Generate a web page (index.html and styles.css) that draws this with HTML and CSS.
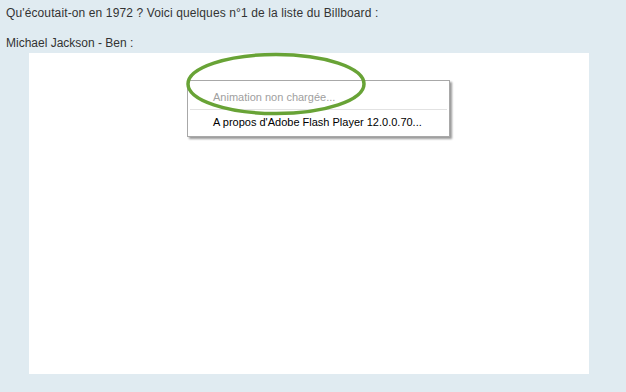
FILE: index.html
```html
<!DOCTYPE html>
<html lang="fr">
<head>
    <meta charset="UTF-8">
    <title>Billboard 1972</title>
    <link rel="stylesheet" href="styles.css">
</head>
<body>
    <div class="post">
        <p class="intro">Qu'écoutait-on en 1972 ? Voici quelques n°1 de la liste du Billboard :</p>
        <p class="song">Michael Jackson - Ben :</p>
        <div class="player">
            <svg class="circle" width="186" height="68" viewBox="0 0 186 68">
                <ellipse cx="92" cy="34" rx="88" ry="29.5" fill="none" stroke="#68a336" stroke-width="3.5"/>
            </svg>
            <div class="menu">
                <div class="menu-item disabled">Animation non chargée...</div>
                <div class="menu-sep"></div>
                <div class="menu-item">A propos d'Adobe Flash Player 12.0.0.70...</div>
            </div>
        </div>
    </div>
</body>
</html>
```

FILE: styles.css
```css
body {
    margin: 0;
    background-color: #e0ebf1;
    font-family: "Liberation Sans", Arial, sans-serif;
    font-size: 12px;
    color: #333;
}
.post {
    padding: 6px 0 0 6px;
}
.intro,
.song {
    margin: 0;
    line-height: 15px;
}
.intro {
    letter-spacing: 0.12px;
}
.song {
    margin-top: 15px;
}
.player {
    position: relative;
    width: 560px;
    height: 321px;
    margin: 2px 0 0 23px;
    background-color: white;
}
.menu {
    position: absolute;
    left: 158px;
    top: 27px;
    width: 261px;
    height: 55px;
    background-color: white;
    border: 1px solid #a8a8a8;
    box-shadow: 2px 2px 2px rgba(0, 0, 0, 0.4);
    font-family: "Liberation Sans", Tahoma, sans-serif;
    font-size: 11px;
    color: #000;
}
.menu-item {
    padding-left: 25px;
    height: 24px;
    line-height: 24px;
}
.menu-item.disabled {
    color: #a0a0a0;
    padding-top: 4px;
}
.menu-sep {
    height: 1px;
    margin: 0 2px;
    background-color: #e2e2e2;
}
.circle {
    position: absolute;
    left: 155px;
    top: -3px;
    z-index: 2;
}
```
